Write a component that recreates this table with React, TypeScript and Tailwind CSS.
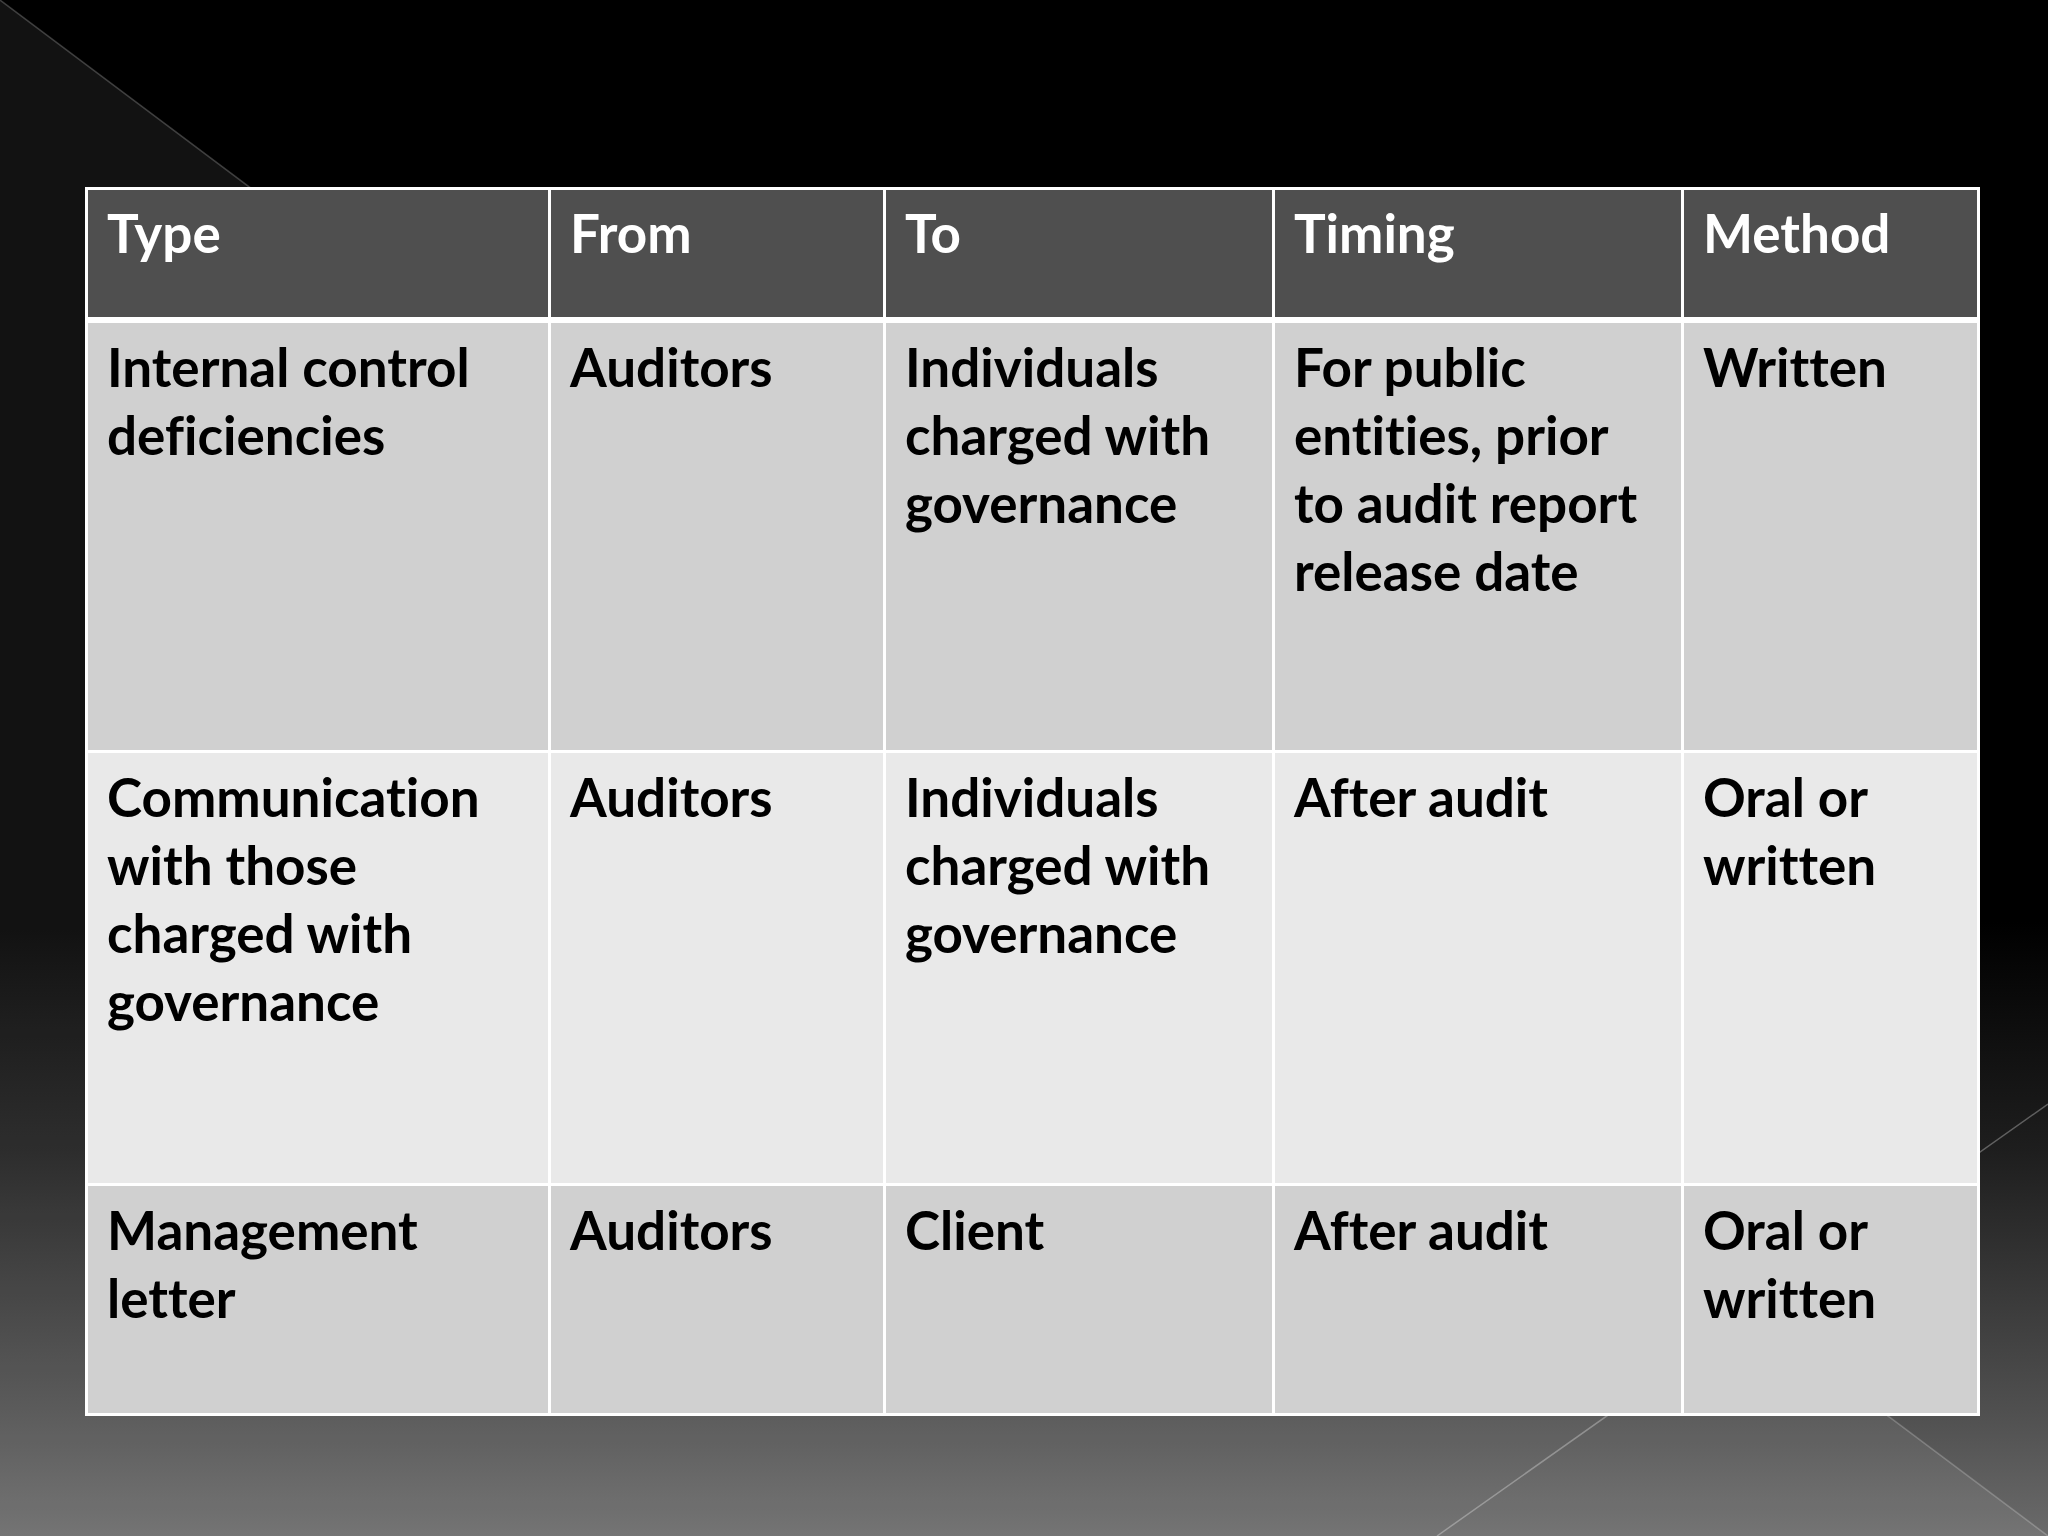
import React from "react";

type Row = { bg: string; h: string; cells: string[][] };

const cols = "grid grid-cols-[460px_332px_386px_406px_293px] gap-x-[3px]";

const header = ["Type", "From", "To", "Timing", "Method"];

const rows: Row[] = [
  {
    bg: "bg-[#d0d0d0]",
    h: "h-[427px]",
    cells: [
      ["Internal control", "deficiencies"],
      ["Auditors"],
      ["Individuals", "charged with", "governance"],
      ["For public", "entities, prior", "to audit report", "release date"],
      ["Written"],
    ],
  },
  {
    bg: "bg-[#e9e9e9]",
    h: "h-[430px]",
    cells: [
      ["Communication", "with those", "charged with", "governance"],
      ["Auditors"],
      ["Individuals", "charged with", "governance"],
      ["After audit"],
      ["Oral or", "written"],
    ],
  },
  {
    bg: "bg-[#d0d0d0]",
    h: "h-[227px]",
    cells: [
      ["Management", "letter"],
      ["Auditors"],
      ["Client"],
      ["After audit"],
      ["Oral or", "written"],
    ],
  },
];

function Backdrop() {
  return (
    <svg className="absolute inset-0" width="2048" height="1536" viewBox="0 0 2048 1536">
      <polygon points="0,0 2048,1536 0,1536" fill="#ffffff" fillOpacity="0.07" />
      <line x1="0" y1="0" x2="2048" y2="1536" stroke="#ffffff" strokeOpacity="0.22" strokeWidth="1.5" />
      <line x1="2048" y1="1104" x2="1437" y2="1536" stroke="#ffffff" strokeOpacity="0.3" strokeWidth="1.5" />
    </svg>
  );
}

export default function App() {
  return (
    <div className="relative w-[2048px] h-[1536px] overflow-hidden bg-[linear-gradient(to_bottom,#000000_0%,#000000_60%,#1e1e1e_75%,#505050_92%,#6a6a6a_100%)] font-[Lato,sans-serif] font-bold [font-variant-ligatures:none]">
      <Backdrop />
      <div className="relative pt-[187px] pl-[85px]">
        <div className="w-[1895px] bg-white p-[3px] flex flex-col gap-[3px]">
          <div className={`${cols} mb-[3px]`}>
            {header.map((t) => (
              <div key={t} className="h-[127px] bg-[#4f4f4f] pl-[19px] pt-[9px] text-white text-[53px] leading-[68px]">
                {t}
              </div>
            ))}
          </div>
          {rows.map((r, i) => (
            <div key={i} className={cols}>
              {r.cells.map((lines, j) => (
                <div key={j} className={`${r.bg} ${r.h} pl-[19px] pt-[10px] text-black text-[53px] leading-[68px]`}>
                  {lines.map((l) => (
                    <div key={l} className="whitespace-nowrap">{l}</div>
                  ))}
                </div>
              ))}
            </div>
          ))}
        </div>
      </div>
    </div>
  );
}
